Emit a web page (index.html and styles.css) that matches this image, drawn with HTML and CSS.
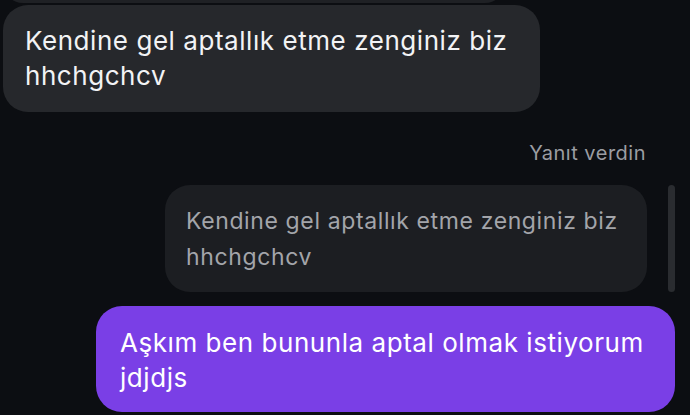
FILE: index.html
```html
<!DOCTYPE html>
<html lang="tr">
<head>
<meta charset="utf-8">
<link rel="stylesheet" href="styles.css">
</head>
<body>
<div class="chat">
  <div class="bubble bubble-prev"></div>
  <div class="bubble bubble-in">Kendine gel aptallık etme zenginiz biz<br>hhchgchcv</div>
  <div class="reply-label">Yanıt verdin</div>
  <div class="bubble bubble-quote">Kendine gel aptallık etme zenginiz biz<br>hhchgchcv</div>
  <div class="bubble bubble-out">Aşkım ben bununla aptal olmak istiyorum<br>jdjdjs</div>
  <div class="scrollbar"></div>
</div>
</body>
</html>
```
FILE: styles.css
```css
html, body {
  margin: 0;
  padding: 0;
  background: #0c0e12;
}
.chat {
  position: relative;
  width: 690px;
  height: 415px;
  overflow: hidden;
  display: flex;
  flex-direction: column;
  font-family: Inter, "Noto Sans", "DejaVu Sans", sans-serif;
  -webkit-font-smoothing: antialiased;
}
.bubble {
  box-sizing: border-box;
  border-radius: 25px;
  white-space: nowrap;
  flex: none;
}
.bubble-prev {
  margin-top: -37px;
  margin-left: 3px;
  width: 502px;
  height: 40px;
  background: #1f2125;
}
.bubble-in {
  margin-top: 2px;
  margin-left: 3px;
  width: 537px;
  padding: 18px 0 19px 22px;
  background: #26282c;
  color: #f2f3f5;
  font-size: 26px;
  letter-spacing: 0.55px;
  line-height: 35px;
}
.reply-label {
  margin-top: 30px;
  align-self: flex-end;
  margin-right: 44px;
  color: #9b9da2;
  font-size: 20px;
  letter-spacing: 0.5px;
  line-height: 22px;
}
.bubble-quote {
  margin-top: 21px;
  align-self: flex-end;
  margin-right: 43px;
  width: 482px;
  padding: 18px 0 17px 21px;
  background: #1c1e22;
  color: #a3a5aa;
  font-size: 23px;
  letter-spacing: 0.62px;
  line-height: 36px;
}
.bubble-out {
  margin-top: 14px;
  margin-left: 96px;
  width: 579px;
  padding: 19px 0 17px 24px;
  background: #7a3fe6;
  color: #ffffff;
  font-size: 26px;
  letter-spacing: 0.55px;
  line-height: 35px;
  border-radius: 26px;
}
.scrollbar {
  position: absolute;
  left: 668px;
  top: 185px;
  width: 7px;
  height: 107px;
  border-radius: 4px;
  background: #2a2c30;
}
```
